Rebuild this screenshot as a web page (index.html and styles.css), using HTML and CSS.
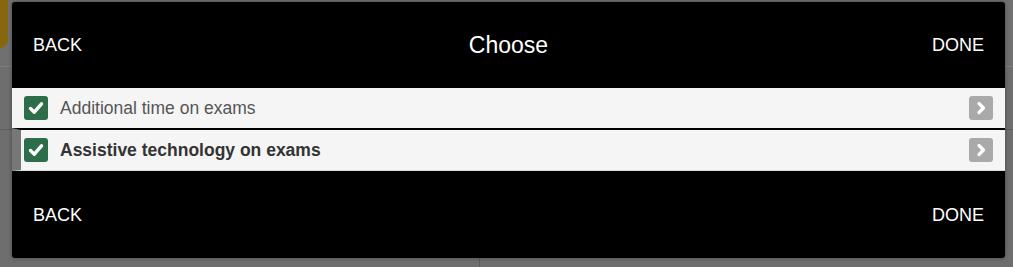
FILE: index.html
```html
<!DOCTYPE html>
<html>
<head>
<meta charset="utf-8">
<link rel="stylesheet" href="styles.css">
</head>
<body>
<div class="page">
  <div class="page-top">
    <div class="gold-tab"></div>
  </div>
  <div class="page-body">
    <div class="page-col"></div>
    <div class="page-col"></div>
  </div>
</div>

<div class="modal">
  <div class="bar">
    <span class="bar-btn">BACK</span>
    <span class="bar-title">Choose</span>
    <span class="bar-btn">DONE</span>
  </div>
  <div class="list">
    <div class="item">
      <span class="check">
        <svg width="24" height="24" viewBox="0 0 24 24"><path d="M6.5 12.5 L10.3 16.2 L17.5 7.8" fill="none" stroke="#fff" stroke-width="3.4" stroke-linecap="round" stroke-linejoin="round"/></svg>
      </span>
      <span class="label">Additional time on exams</span>
      <span class="more">
        <svg width="24" height="24" viewBox="0 0 24 24"><path d="M10 7.5 L14.5 12 L10 16.5" fill="none" stroke="#fff" stroke-width="3.2" stroke-linecap="round" stroke-linejoin="round"/></svg>
      </span>
    </div>
    <div class="item item-active">
      <span class="check">
        <svg width="24" height="24" viewBox="0 0 24 24"><path d="M6.5 12.5 L10.3 16.2 L17.5 7.8" fill="none" stroke="#fff" stroke-width="3.4" stroke-linecap="round" stroke-linejoin="round"/></svg>
      </span>
      <span class="label label-bold">Assistive technology on exams</span>
      <span class="more">
        <svg width="24" height="24" viewBox="0 0 24 24"><path d="M10 7.5 L14.5 12 L10 16.5" fill="none" stroke="#fff" stroke-width="3.2" stroke-linecap="round" stroke-linejoin="round"/></svg>
      </span>
    </div>
  </div>
  <div class="bar bar-foot">
    <span class="bar-btn">BACK</span>
    <span class="bar-btn">DONE</span>
  </div>
</div>
</body>
</html>
```

FILE: styles.css
```css
html, body {
  margin: 0;
  padding: 0;
}
body {
  width: 1013px;
  height: 267px;
  overflow: hidden;
  background: #6e6e6e;
  font-family: "Liberation Sans", Arial, sans-serif;
  position: relative;
}
.page {
  display: flex;
  flex-direction: column;
  height: 267px;
}
.page-top {
  height: 67px;
  border-bottom: 1px solid #7c7c7c;
  background: #707070;
  box-sizing: border-box;
}
.gold-tab {
  width: 8px;
  height: 48px;
  background: #86670f;
  border-bottom-right-radius: 8px;
}
.page-body {
  flex: 1;
  display: grid;
  grid-template-columns: 479px 1fr;
}
.page-col {
  border-top: 1px solid #5f5f5f;
  margin-top: 62px;
}
.page-col + .page-col {
  border-left: 1px solid #5c5c5c;
}
.modal {
  position: absolute;
  left: 12px;
  top: 2px;
  width: 993px;
  height: 256px;
  background: #000;
  border-radius: 3px;
  overflow: hidden;
  display: flex;
  flex-direction: column;
  box-shadow: 0 0 4px rgba(0,0,0,0.35);
}
.bar {
  height: 86px;
  display: flex;
  align-items: center;
  justify-content: space-between;
  padding: 0 21px;
  color: #fff;
}
.bar-foot {
  height: 87px;
}
.bar-btn {
  font-size: 18px;
  line-height: 20px;
}
.bar-title {
  font-size: 23px;
  line-height: 26px;
  position: absolute;
  left: 0;
  right: 0;
  top: 30px;
  text-align: center;
  pointer-events: none;
}
.list {
  display: flex;
  flex-direction: column;
}
.item {
  height: 40px;
  background: #f5f5f5;
  display: flex;
  align-items: center;
  padding: 0 12px;
}
.item + .item {
  border-top: 2px solid #000;
}
.item-active {
  border-left: 9px solid #777;
  padding-left: 3px;
  border-bottom: 1px solid #dcdcdc;
}
.check {
  width: 24px;
  height: 24px;
  background: #2c6e49;
  border-radius: 3px;
  display: flex;
  flex: none;
}
.label {
  flex: 1;
  margin-left: 12px;
  font-size: 17.5px;
  color: #555;
}
.label-bold {
  font-weight: bold;
  color: #333;
}
.more {
  width: 24px;
  height: 24px;
  background: #a9a9a9;
  border-radius: 3px;
  display: flex;
  flex: none;
}
```
